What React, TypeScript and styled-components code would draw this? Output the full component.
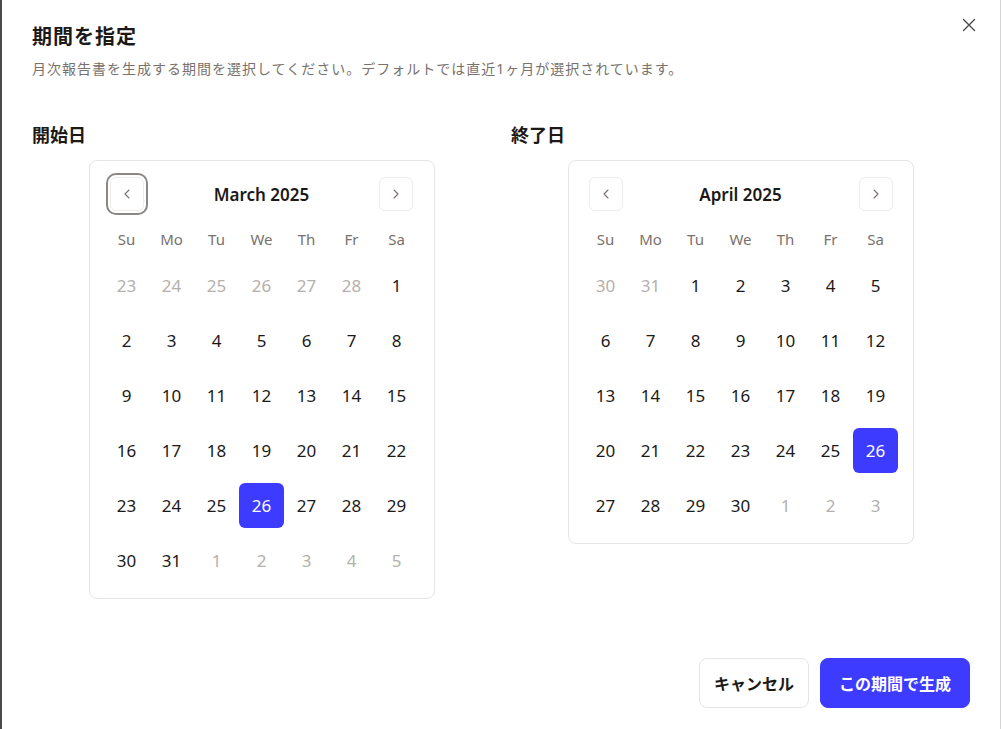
import React from 'react';
import styled, { createGlobalStyle } from 'styled-components';

const GlobalStyle = createGlobalStyle`
  html, body {
    margin: 0;
    padding: 0;
    background: #ffffff;
  }
  body {
    font-family: "Noto Sans", "Noto Sans CJK JP", sans-serif;
    color: #1c1917;
  }
`;

const Dialog = styled.div`
  position: relative;
  box-sizing: border-box;
  min-height: 100vh;
  display: flex;
  flex-direction: column;
  border-left: 2px solid #4a4a4a;
  border-right: 1px solid #d4d4d4;
  padding: 23px 30px 21px 30px;
`;

const CloseButton = styled.button`
  position: absolute;
  top: 17px;
  right: 23px;
  width: 16px;
  height: 16px;
  padding: 0;
  border: none;
  background: none;
  display: flex;
  align-items: center;
  justify-content: center;
  color: #4b4b4b;
  cursor: pointer;
`;

const Title = styled.h2`
  margin: 0;
  font-size: 20px;
  line-height: 28px;
  font-weight: 700;
  letter-spacing: 1px;
`;

const Description = styled.p`
  margin: 8px 0 0;
  font-size: 14px;
  line-height: 20px;
  letter-spacing: 1px;
  color: #78716c;
`;

const Columns = styled.div`
  display: grid;
  grid-template-columns: 1fr 1fr;
  gap: 20px;
  margin-top: 44px;
`;

const Column = styled.div`
  display: flex;
  flex-direction: column;
`;

const Label = styled.div`
  font-size: 18px;
  line-height: 24px;
  font-weight: 700;
`;

const CalendarWrap = styled.div`
  display: flex;
  justify-content: center;
  margin-top: 13px;
`;

const Calendar = styled.div`
  box-sizing: border-box;
  width: 346px;
  border: 1px solid #e7e5e4;
  border-radius: 8px;
  padding: 16px 16px 15px;
`;

const Header = styled.div`
  display: flex;
  align-items: center;
  justify-content: space-between;
  padding: 0 4px;
  height: 34px;
`;

const MonthTitle = styled.div`
  font-size: 17px;
  font-weight: 600;
`;

const NavButton = styled.button<{ $focused?: boolean }>`
  box-sizing: border-box;
  width: 34px;
  height: 34px;
  border: 1px solid #eeecea;
  border-radius: 6px;
  background: #ffffff;
  display: flex;
  align-items: center;
  justify-content: center;
  padding: 0;
  color: #78716c;
  outline: ${p => (p.$focused ? '2px solid #8a8784' : 'none')};
  outline-offset: 2px;
`;

const Grid = styled.div`
  display: grid;
  grid-template-columns: repeat(7, 45px);
  justify-content: center;
`;

const Weekdays = styled(Grid)`
  margin-top: 16px;
`;

const Weekday = styled.div`
  height: 24px;
  line-height: 24px;
  text-align: center;
  font-size: 15px;
  color: #78716c;
`;

const Days = styled(Grid)`
  margin-top: 12px;
  row-gap: 10px;
`;

const Day = styled.div<{ $outside?: boolean; $selected?: boolean }>`
  height: 45px;
  display: flex;
  align-items: center;
  justify-content: center;
  border-radius: 6px;
  font-size: 17px;
  color: ${p => (p.$selected ? '#ffffff' : p.$outside ? '#b5b0ab' : '#1c1917')};
  background: ${p => (p.$selected ? '#3d3bff' : 'transparent')};
`;

const Footer = styled.div`
  display: flex;
  justify-content: flex-end;
  gap: 11px;
  margin-top: 59px;
`;

const Button = styled.button<{ $primary?: boolean }>`
  box-sizing: border-box;
  width: ${p => (p.$primary ? '150px' : '110px')};
  height: 50px;
  padding: 0;
  border-radius: 8px;
  font-family: inherit;
  font-size: 16px;
  font-weight: 700;
  border: 1px solid ${p => (p.$primary ? '#3d3bff' : '#e7e5e4')};
  background: ${p => (p.$primary ? '#3d3bff' : '#ffffff')};
  color: ${p => (p.$primary ? '#ffffff' : '#1c1917')};
`;

const WEEKDAYS = ['Su', 'Mo', 'Tu', 'We', 'Th', 'Fr', 'Sa'];
const MONTHS = ['January', 'February', 'March', 'April', 'May', 'June', 'July', 'August', 'September', 'October', 'November', 'December'];

type Cell = { day: number; outside: boolean };

function buildMonth(year: number, month: number): Cell[] {
  const first = new Date(year, month, 1).getDay();
  const daysIn = new Date(year, month + 1, 0).getDate();
  const prevDays = new Date(year, month, 0).getDate();
  const cells: Cell[] = [];
  for (let i = first - 1; i >= 0; i--) cells.push({ day: prevDays - i, outside: true });
  for (let d = 1; d <= daysIn; d++) cells.push({ day: d, outside: false });
  let next = 1;
  while (cells.length % 7 !== 0) cells.push({ day: next++, outside: true });
  return cells;
}

const Chevron = ({ dir }: { dir: 'left' | 'right' }) => (
  <svg width="16" height="16" viewBox="0 0 24 24" fill="none" stroke="currentColor" strokeWidth="1.6" strokeLinecap="round" strokeLinejoin="round">
    <path d={dir === 'left' ? 'M15 18l-6-6 6-6' : 'M9 18l6-6-6-6'} />
  </svg>
);

type MonthProps = { year: number; month: number; selected: number; focusPrev?: boolean };

const MonthCalendar = ({ year, month, selected, focusPrev }: MonthProps) => {
  const cells = buildMonth(year, month);
  return (
    <Calendar>
      <Header>
        <NavButton $focused={focusPrev} aria-label="前の月">
          <Chevron dir="left" />
        </NavButton>
        <MonthTitle>{MONTHS[month]} {year}</MonthTitle>
        <NavButton aria-label="次の月">
          <Chevron dir="right" />
        </NavButton>
      </Header>
      <Weekdays>
        {WEEKDAYS.map(w => (
          <Weekday key={w}>{w}</Weekday>
        ))}
      </Weekdays>
      <Days>
        {cells.map((c, i) => (
          <Day key={i} $outside={c.outside} $selected={!c.outside && c.day === selected}>
            {c.day}
          </Day>
        ))}
      </Days>
    </Calendar>
  );
};

export default function App() {
  return (
    <>
      <GlobalStyle />
      <Dialog>
        <CloseButton aria-label="閉じる">
          <svg width="14" height="14" viewBox="0 0 14 14" fill="none" stroke="currentColor" strokeWidth="1.4" strokeLinecap="round">
            <path d="M1.5 1.5l11 11M12.5 1.5l-11 11" />
          </svg>
        </CloseButton>
        <Title>期間を指定</Title>
        <Description>月次報告書を生成する期間を選択してください。デフォルトでは直近1ヶ月が選択されています。</Description>
        <Columns>
          <Column>
            <Label>開始日</Label>
            <CalendarWrap>
              <MonthCalendar year={2025} month={2} selected={26} focusPrev />
            </CalendarWrap>
          </Column>
          <Column>
            <Label>終了日</Label>
            <CalendarWrap>
              <MonthCalendar year={2025} month={3} selected={26} />
            </CalendarWrap>
          </Column>
        </Columns>
        <Footer>
          <Button>キャンセル</Button>
          <Button $primary>この期間で生成</Button>
        </Footer>
      </Dialog>
    </>
  );
}
